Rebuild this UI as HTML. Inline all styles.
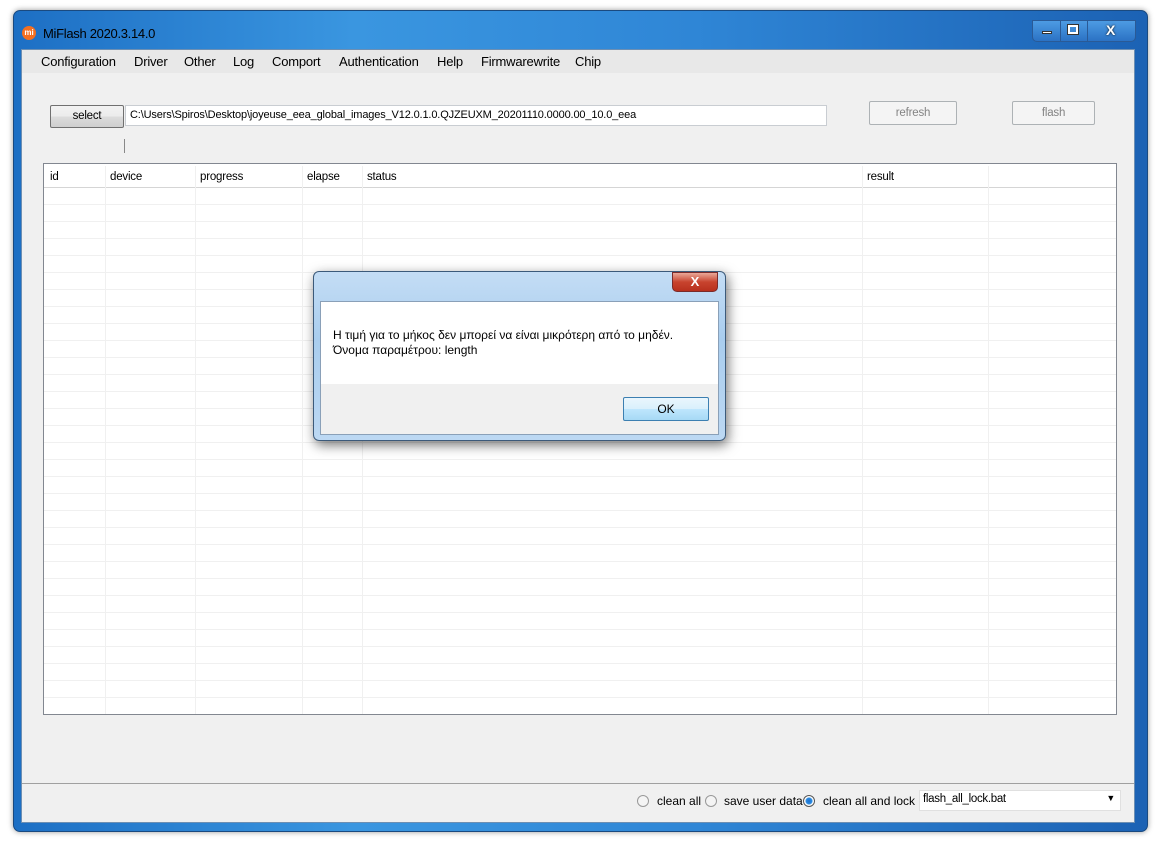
<!DOCTYPE html>
<html><head><meta charset="utf-8"><style>
*{margin:0;padding:0;box-sizing:border-box}
body{width:1158px;height:841px;background:#fff;position:relative;overflow:hidden;font-family:"Liberation Sans","DejaVu Sans",sans-serif;font-size:12px;color:#000}
.abs{position:absolute}
.frame{left:13px;top:10px;width:1135px;height:822px;background:linear-gradient(90deg,#1d6fc4,#3a96e0 30%,#2f86d6 60%,#1c62b4);border-radius:7px;border:1px solid #1a4a80;box-shadow:0 0 6px rgba(0,0,0,.4)}
.client{left:21px;top:49px;width:1114px;height:774px;background:#f0f0f0;border:1px solid #6d8fb3}
.menu{left:0;top:0;width:100%;height:23px;background:#e8e8e8;font-size:13px;letter-spacing:-0.2px}
.menu span{position:absolute;top:4px}
.btn{border:1px solid #707070;border-radius:2px;background:linear-gradient(#f2f2f2,#ebebeb 50%,#dcdcdc 51%,#cfcfcf);text-align:center;font-size:12px}
.dis{border:1px solid #adb2b5;border-radius:2px;background:#f4f4f4;color:#838383;text-align:center;font-size:12px}
.t{font-size:11.5px;letter-spacing:-0.2px}
.s{font-size:12px}
</style></head><body>
<div class="abs frame"></div>
<div class="abs" style="left:22px;top:26px;width:14px;height:14px;border-radius:50%;background:#f36f21;color:#fff;font-size:8px;line-height:14px;text-align:center;font-weight:bold">mi</div>
<div class="abs" style="left:43px;top:26px;font-size:13px;letter-spacing:-0.3px;color:#000">MiFlash 2020.3.14.0</div>
<div class="abs" style="left:1032px;top:20px;width:104px;height:22px;border:1px solid #2a5a96;border-radius:0 0 5px 5px;background:linear-gradient(#4d9be3,#2b72c4)"></div>
<div class="abs" style="left:1060px;top:21px;width:1px;height:20px;background:#2a5a96"></div>
<div class="abs" style="left:1087px;top:21px;width:1px;height:20px;background:#2a5a96"></div>
<div class="abs" style="left:1042px;top:31px;width:10px;height:3px;background:#fff;border:1px solid #333"></div>
<div class="abs" style="left:1068px;top:25px;width:10px;height:9px;border:2px solid #fff;outline:1px solid #333"></div>
<div class="abs" style="left:1106px;top:22px;color:#fff;font-weight:bold;font-size:14px;text-shadow:0 0 2px #000">X</div>
<div class="abs client">
 <div class="abs menu">
  <span style="left:19px">Configuration</span><span style="left:112px">Driver</span><span style="left:162px">Other</span><span style="left:211px">Log</span><span style="left:250px">Comport</span><span style="left:317px">Authentication</span><span style="left:415px">Help</span><span style="left:459px">Firmwarewrite</span><span style="left:553px">Chip</span>
 </div>
 <div class="abs btn t" style="left:28px;top:55px;width:74px;height:23px;line-height:21px">select</div>
 <div class="abs" style="left:103px;top:55px;width:702px;height:21px;background:#fff;border:1px solid #c9cdd2;padding:3px 4px;font-size:11px;letter-spacing:-0.15px;white-space:nowrap">C:\Users\Spiros\Desktop\joyeuse_eea_global_images_V12.0.1.0.QJZEUXM_20201110.0000.00_10.0_eea</div>
 <div class="abs dis t" style="left:847px;top:51px;width:88px;height:24px;line-height:22px">refresh</div>
 <div class="abs dis t" style="left:990px;top:51px;width:83px;height:24px;line-height:22px">flash</div>
 <div class="abs" style="left:102px;top:89px;width:1px;height:14px;background:#888"></div>
 <div class="abs t" style="left:21px;top:113px;width:1074px;height:552px;background:#fff;border:1px solid #828790">
  <div class="abs" style="left:0;top:2px;width:1072px;height:22px;border-bottom:1px solid #d5d5d5"></div>
  <div class="abs" style="left:0;top:24px;width:1072px;height:526px;background:repeating-linear-gradient(to bottom,transparent 0,transparent 16px,#f0f0f0 16px,#f0f0f0 17px)"></div>
  <div class="abs" style="left:61px;top:2px;width:1px;height:548px;background:#f0f0f0"></div>
  <div class="abs" style="left:151px;top:2px;width:1px;height:548px;background:#f0f0f0"></div>
  <div class="abs" style="left:258px;top:2px;width:1px;height:548px;background:#f0f0f0"></div>
  <div class="abs" style="left:318px;top:2px;width:1px;height:548px;background:#f0f0f0"></div>
  <div class="abs" style="left:818px;top:2px;width:1px;height:548px;background:#f0f0f0"></div>
  <div class="abs" style="left:944px;top:2px;width:1px;height:548px;background:#f0f0f0"></div>
  <div class="abs" style="left:6px;top:7px">id</div><div class="abs" style="left:66px;top:7px">device</div><div class="abs" style="left:156px;top:7px">progress</div><div class="abs" style="left:263px;top:7px">elapse</div><div class="abs" style="left:323px;top:7px">status</div><div class="abs" style="left:823px;top:7px">result</div>
 </div>
 <div class="abs" style="left:0;top:733px;width:1112px;height:1px;background:#a0a0a0"></div>
 <div class="abs" style="left:615px;top:745px;width:12px;height:12px;border-radius:50%;border:1px solid #999;background:#f4f4f4"></div>
 <div class="abs s" style="left:635px;top:744px">clean all</div>
 <div class="abs" style="left:683px;top:745px;width:12px;height:12px;border-radius:50%;border:1px solid #999;background:#f4f4f4"></div>
 <div class="abs s" style="left:702px;top:744px">save user data</div>
 <div class="abs" style="left:781px;top:745px;width:12px;height:12px;border-radius:50%;border:1px solid #555;background:radial-gradient(#1a6fd0 0,#2b8ae0 3px,#fff 4px)"></div>
 <div class="abs s" style="left:801px;top:744px">clean all and lock</div>
 <div class="abs" style="left:897px;top:740px;width:202px;height:21px;background:#fff;border:1px solid #e0e0e0;padding:2px 3px;font-size:11.5px;letter-spacing:-0.3px">flash_all_lock.bat<span style="position:absolute;right:5px;top:2px;font-size:9px">▼</span></div>
</div>
<!-- dialog -->
<div class="abs" style="left:313px;top:271px;width:413px;height:170px;border-radius:6px;border:1px solid #3c5a7a;background:linear-gradient(#c4ddf5,#a9cdee 40%,#bcd8f3);box-shadow:2px 4px 12px rgba(0,0,0,.55)"></div>
<div class="abs" style="left:672px;top:272px;width:46px;height:20px;border-radius:0 0 5px 5px;border:1px solid #7a2b2b;background:linear-gradient(#e9a899,#c8432e 50%,#b8301e);color:#fff;font-weight:bold;text-align:center;font-size:13px;line-height:18px">X</div>
<div class="abs" style="left:320px;top:301px;width:399px;height:134px;background:#f0f0f0;border:1px solid #8aa0b8"></div>
<div class="abs" style="left:321px;top:302px;width:397px;height:82px;background:#fff"></div>
<div class="abs" style="left:333px;top:328px;font-family:'Liberation Sans','DejaVu Sans',sans-serif;font-size:12px;line-height:15px;white-space:nowrap">Η τιμή για το μήκος δεν μπορεί να είναι μικρότερη από το μηδέν.<br>Όνομα παραμέτρου: length</div>
<div class="abs btn" style="left:623px;top:397px;width:86px;height:24px;line-height:22px;border-color:#3c7fb1;background:linear-gradient(#eaf6fd,#d9f0fc 50%,#bee6fd 51%,#a7d9f5)">OK</div>
</body></html>
